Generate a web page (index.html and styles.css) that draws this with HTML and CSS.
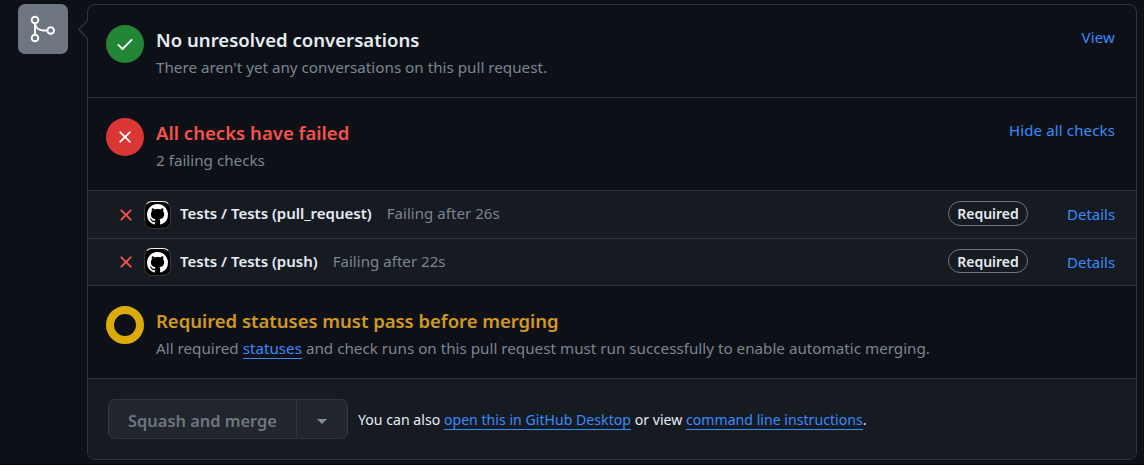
FILE: index.html
```html
<!DOCTYPE html>
<html lang="en">
<head>
<meta charset="utf-8">
<title>Merge status</title>
<link rel="stylesheet" href="styles.css">
</head>
<body>
<svg class="defs" width="0" height="0" aria-hidden="true">
  <symbol id="x" viewBox="0 0 16 16"><path d="M3.72 3.72a.75.75 0 0 1 1.06 0L8 6.94l3.22-3.22a.749.749 0 0 1 1.275.326.749.749 0 0 1-.215.734L9.06 8l3.22 3.22a.749.749 0 0 1-.326 1.275.749.749 0 0 1-.734-.215L8 9.06l-3.22 3.22a.751.751 0 0 1-1.042-.018.751.751 0 0 1-.018-1.042L6.94 8 3.72 4.78a.75.75 0 0 1 0-1.06Z"/></symbol>
  <symbol id="octocat" viewBox="0 0 16 16"><path d="M8 0c4.42 0 8 3.58 8 8a8.013 8.013 0 0 1-5.45 7.59c-.4.08-.55-.17-.55-.38 0-.27.01-1.13.01-2.2 0-.75-.25-1.23-.54-1.48 1.78-.2 3.65-.88 3.65-3.95 0-.88-.31-1.59-.82-2.15.08-.2.36-1.02-.08-2.12 0 0-.67-.22-2.2.82-.64-.18-1.32-.27-2-.27-.68 0-1.36.09-2 .27-1.53-1.03-2.2-.82-2.2-.82-.44 1.1-.16 1.92-.08 2.12-.51.56-.82 1.28-.82 2.15 0 3.06 1.86 3.75 3.64 3.95-.23.2-.44.55-.51 1.07-.46.21-1.61.55-2.33-.66-.15-.24-.6-.83-1.23-.82-.67.01-.27.38.01.53.34.19.73.9.82 1.13.16.45.68 1.31 2.69.94 0 .67.01 1.3.01 1.49 0 .21-.15.45-.55.38A7.995 7.995 0 0 1 0 8c0-4.42 3.58-8 8-8Z"/></symbol>
</svg>
<main class="page">
  <div class="merge-badge">
    <svg width="30" height="30" viewBox="0 0 30 30" fill="none" stroke="currentColor" stroke-width="1.9"><circle cx="7" cy="6" r="3.3"/><circle cx="7" cy="24" r="3.3"/><circle cx="22.7" cy="16.5" r="3.3"/><path d="M7 9.3v11.4M7 9.5c.6 4.2 4 7 8 7h4.4"/></svg>
  </div>
  <div class="box">
    <svg class="caret" width="10" height="20" viewBox="0 0 10 20"><path d="M10 0 .7 9.5 10 19z" fill="#0d1117"/><path d="M9.5.5.7 9.5l8.8 9" fill="none" stroke="#30363d" stroke-width="1.2"/></svg>
    <section class="item">
      <div class="status success"><svg width="20" height="20" viewBox="0 0 16 16" fill="currentColor"><path d="M13.78 4.22a.75.75 0 0 1 0 1.06l-7.25 7.25a.75.75 0 0 1-1.06 0L2.22 9.28a.751.751 0 0 1 .018-1.042.751.751 0 0 1 1.042-.018L6 10.94l6.72-6.72a.75.75 0 0 1 1.06 0Z"/></svg></div>
      <div class="text"><h3>No unresolved conversations</h3><p>There aren't yet any conversations on this pull request.</p></div>
      <a class="link">View</a>
    </section>
    <section class="item">
      <div class="status danger"><svg width="20" height="20" fill="currentColor"><use href="#x"/></svg></div>
      <div class="text"><h3 class="failed">All checks have failed</h3><p>2 failing checks</p></div>
      <a class="link">Hide all checks</a>
    </section>
    <div class="check">
      <svg class="fail" width="20" height="20" fill="currentColor"><use href="#x"/></svg>
      <span class="avatar"><svg width="21" height="21" fill="#fff"><use href="#octocat"/></svg></span>
      <strong>Tests / Tests (pull_request)</strong><span class="after">Failing after 26s</span>
      <span class="required"><span>Required</span></span><a class="link details">Details</a>
    </div>
    <div class="check last">
      <svg class="fail" width="20" height="20" fill="currentColor"><use href="#x"/></svg>
      <span class="avatar"><svg width="21" height="21" fill="#fff"><use href="#octocat"/></svg></span>
      <strong>Tests / Tests (push)</strong><span class="after">Failing after 22s</span>
      <span class="required"><span>Required</span></span><a class="link details">Details</a>
    </div>
    <section class="item">
      <div class="status pending"></div>
      <div class="text"><h3 class="waiting">Required statuses must pass before merging</h3><p>All required <a class="link underlined">statuses</a> and check runs on this pull request must run successfully to enable automatic merging.</p></div>
    </section>
    <footer class="footer">
      <div class="group"><button class="merge" disabled><span>Squash and merge</span></button><button class="drop" disabled><i class="arrow"></i></button></div>
      <p class="also">You can also <a class="link underlined">open this in GitHub Desktop</a> or view <a class="link underlined">command line instructions</a>.</p>
    </footer>
  </div>
</main>
</body>
</html>
```
FILE: styles.css
```css
* { box-sizing: border-box; }
body { margin: 0; background: #0d1117; color: #e6edf3; font-family: "Noto Sans", "Open Sans", sans-serif; font-size: 15px; overflow: hidden; }
.defs { display: block; }
.page { display: flex; align-items: flex-start; height: 465px; padding: 4px 7px 4px 18px; border-bottom: 1px solid #08020c; }
.merge-badge { width: 50px; height: 50px; margin-right: 19px; border-radius: 7px; background: #6e7681; color: #fff; display: flex; align-items: center; justify-content: center; }
.box { position: relative; flex: 1; height: 456px; border: 1px solid #30363d; border-radius: 8px; }
.caret { position: absolute; left: -10px; top: 15px; }
.item { display: flex; height: 93px; padding: 20px 21px 0 18px; border-bottom: 1px solid #30363d; }
.status { width: 38px; height: 38px; border-radius: 50%; color: #fff; display: flex; align-items: center; justify-content: center; margin-right: 12px; }
.success { background: #238636; }
.danger { background: #da3633; }
.pending { border: 8px solid #dbab0a; }
.text { flex: 1; white-space: nowrap; }
h3 { margin: 0; font-size: 18.5px; line-height: 29px; font-weight: 600; letter-spacing: .03px; }
p { margin: 0; }
.text p { font-size: 15.2px; line-height: 24px; padding-top: 1px; color: #7d8590; letter-spacing: .01px; }
.failed { color: #f85149; }
.waiting { color: #d29922; letter-spacing: -.03px; }
.link { color: #388bfd; white-space: nowrap; }
.item > .link { font-size: 15px; letter-spacing: .14px; line-height: 24px; }
.check { display: flex; align-items: center; height: 48px; padding: 0 20px 0 28px; background: #161b22; border-bottom: 1px solid #30363d; white-space: nowrap; }
.check.last { height: 47px; }
.fail { color: #f85149; margin-right: 8px; }
.avatar { width: 27px; height: 28px; border: 1px solid #36383b; border-top-color: #eee; border-radius: 8px; background: #000; display: flex; align-items: center; justify-content: center; margin-right: 9px; }
strong { font-weight: 600; padding-bottom: 3px; }
.after { color: #7d8590; margin-left: 15px; padding-bottom: 3px; letter-spacing: .05px; }
.last strong, .last .after { padding-bottom: 2px; }
.required { width: 80px; height: 25px; margin-left: auto; margin-bottom: 2px; border: 1px solid #6e7681; border-radius: 13px; display: flex; align-items: center; justify-content: center; font-weight: 600; font-size: 14px; }
.last .required { height: 24px; }
.details { width: 49px; margin-left: 39px; padding-bottom: 1px; }
.footer { display: flex; height: 80px; padding: 20px; background: #161b22; border-radius: 0 0 7px 7px; }
.group { display: flex; width: 240px; height: 40px; border: 1px solid #30363d; border-radius: 7px; background: #21262d; overflow: hidden; }
button { padding: 0; border: 0; background: none; font: inherit; color: #6e7681; display: flex; align-items: center; justify-content: center; }
.merge { width: 188px; border-right: 1px solid #30363d; font-size: 16.4px; font-weight: 600; padding-top: 2px; }
.drop { flex: 1; padding-top: 5px; }
.arrow { border: 5px solid transparent; border-top-color: #848d97; border-bottom: 0; }
.also { font-size: 14.1px; line-height: 42px; margin-left: 10px; white-space: nowrap; letter-spacing: .015px; }
.underlined { border-bottom: 1px solid currentColor; }
```
